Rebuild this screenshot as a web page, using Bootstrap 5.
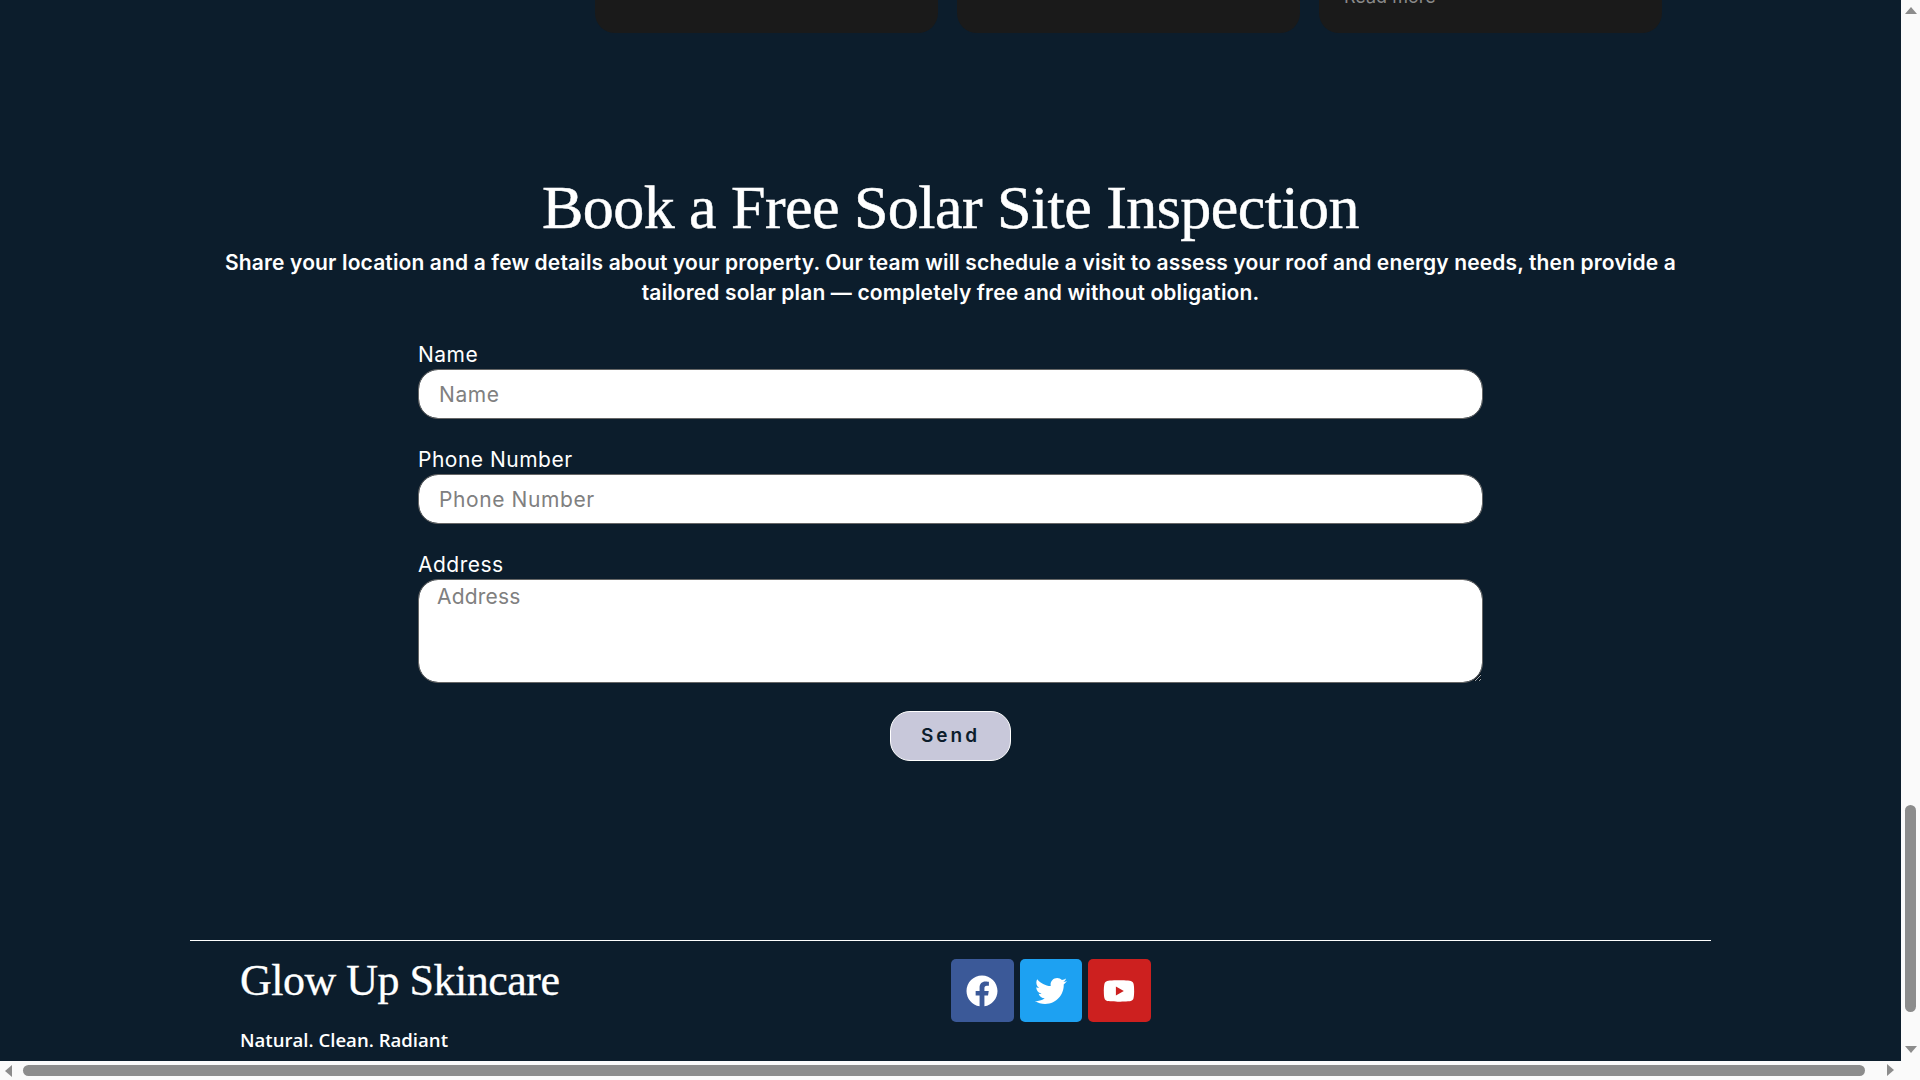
<!DOCTYPE html>
<html lang="en">
<head>
  <meta charset="UTF-8" />
  <meta name="viewport" content="width=device-width, initial-scale=1.0"/>
  <title>Book a Free Solar Site Inspection</title>
  <link href="https://cdn.jsdelivr.net/npm/bootstrap@5.3.3/dist/css/bootstrap.min.css" rel="stylesheet"/>
  <style>
    html, body { height: 100%; overflow: hidden; }
    body { background: #fafafa; font-family: "Inter", "Liberation Sans", sans-serif; }
    .view-row { height: 1061px; }
    .page-view { width: 1901px; background: #0c1d2c; overflow: hidden; color: #fff; }
    .h-row { height: 19px; }

    .blog-row { margin-left: 595px; gap: 19px; height: 33px; }
    .blog-card { width: 343px; background: #1a1a1a; border-radius: 0 0 20px 20px; overflow: hidden; }
    .read-more { display: block; margin: -13px 0 0 25px; font-size: 18px; line-height: 20px; color: #8a8a8a; }

    .inspect-title { margin: 140px 0 0; font-family: "Liberation Serif", serif; font-size: 62px; line-height: 68px; letter-spacing: -.55px; -webkit-text-stroke: .5px #fff; text-align: center; }
    .inspect-sub { margin: 7px auto 0; width: 1460px; font-size: 21px; font-weight: 600; letter-spacing: .14px; line-height: 30px; text-align: center; }
    .inspect-form { width: 1065px; margin: 33px auto 0; }
    .field-wrap { margin-bottom: 27px; }
    .field-wrap.last-field { margin-bottom: 28px; }
    .field-label { display: block; margin: 0; font-size: 21px; letter-spacing: .5px; line-height: 28px; }
    .form-control.solar-input { height: 50px; padding: 0 20px; border: 1px solid #666; border-radius: 20px; font-size: 21px; letter-spacing: .6px; color: #333; }
    .form-control.solar-area { height: 104px; padding: 3px 18px; border: 1px solid #666; border-radius: 20px; font-size: 21px; letter-spacing: .2px; line-height: 28px; color: #333; }
    .solar-input::placeholder, .solar-area::placeholder { color: #808080; }
    .btn.send-btn { width: 121px; height: 50px; padding: 0; background: #c8c8da; border: 1px solid #fff; border-radius: 20px; color: #0c1d2c; font-size: 19px; font-weight: 600; letter-spacing: 3px; }

    .foot-line { width: 1521px; margin: 179px 0 0 190px; padding-top: 15px; border-top: 1px solid #fff; }
    .foot-brand { width: 761px; padding-left: 50px; }
    .foot-title { margin: 0; font-family: "Liberation Serif", serif; font-size: 44px; line-height: 50px; letter-spacing: -.5px; -webkit-text-stroke: .3px #fff; }
    .foot-tag { margin: 22px 0 0; font-family: "Open Sans", sans-serif; font-size: 18.6px; font-weight: 600; line-height: 24px; }
    .social-row { gap: 6px; margin-top: 3px; }
    .social-btn { width: 62.5px; height: 63px; border-radius: 5px; }
    .social-btn svg { width: 32px; height: 32px; fill: #fff; }
    .soc-fb { background: #3b5998; }
    .soc-tw { background: #1da1f2; }
    .soc-yt { background: #cd201f; }

    .v-bar { width: 19px; position: relative; }
    .v-thumb { position: absolute; left: 4px; top: 805px; width: 11px; height: 207px; border-radius: 6px; background: #8c8c8c; }
    .h-thumb { position: absolute; left: 23px; top: 4px; width: 1842px; height: 11px; border-radius: 6px; background: #8c8c8c; }
    .arrow-up { position: absolute; left: 4px; top: 7px; border: 6px solid transparent; border-top: 0; border-bottom: 7px solid #8c8c8c; }
    .arrow-down { position: absolute; left: 4px; top: 1046px; border: 6px solid transparent; border-bottom: 0; border-top: 7px solid #8c8c8c; }
    .arrow-left { position: absolute; left: 5px; top: 4px; border: 6px solid transparent; border-left: 0; border-right: 7px solid #8c8c8c; }
    .arrow-right { position: absolute; left: 1887px; top: 3px; border: 6px solid transparent; border-right: 0; border-left: 7px solid #8c8c8c; }
  </style>
</head>
<body>

  <div class="d-flex view-row">
    <div class="page-view">
      <div class="d-flex blog-row">
        <div class="blog-card"></div>
        <div class="blog-card"></div>
        <div class="blog-card"><a class="read-more text-decoration-none" href="#">Read more</a></div>
      </div>

      <h2 class="inspect-title">Book a Free Solar Site Inspection</h2>
      <p class="inspect-sub">Share your location and a few details about your property. Our team will schedule a visit to assess your roof and energy needs, then provide a tailored solar plan — completely free and without obligation.</p>

      <form class="inspect-form">
        <div class="field-wrap">
          <label class="field-label" for="name">Name</label>
          <input type="text" class="form-control solar-input" id="name" placeholder="Name"/>
        </div>
        <div class="field-wrap">
          <label class="field-label" for="phone">Phone Number</label>
          <input type="text" class="form-control solar-input" id="phone" placeholder="Phone Number"/>
        </div>
        <div class="field-wrap last-field">
          <label class="field-label" for="address">Address</label>
          <textarea class="form-control solar-area" id="address" placeholder="Address"></textarea>
        </div>
        <div class="text-center">
          <button type="button" class="btn send-btn">Send</button>
        </div>
      </form>

      <footer class="foot-line d-flex">
        <div class="foot-brand">
          <h3 class="foot-title">Glow Up Skincare</h3>
          <p class="foot-tag">Natural. Clean. Radiant</p>
        </div>
        <div class="d-flex social-row align-items-start">
          <a href="#" class="social-btn soc-fb d-flex align-items-center justify-content-center" aria-label="Facebook">
            <svg viewBox="0 0 512 512"><path d="M504 256C504 119 393 8 256 8S8 119 8 256c0 123.78 90.69 226.38 209.25 245V327.69h-63V256h63v-54.64c0-62.15 37-96.48 93.67-96.48 27.14 0 55.52 4.84 55.52 4.84v61h-31.28c-30.8 0-40.41 19.12-40.41 38.73V256h68.78l-11 71.69h-57.78V501C413.31 482.38 504 379.78 504 256z"/></svg>
          </a>
          <a href="#" class="social-btn soc-tw d-flex align-items-center justify-content-center" aria-label="Twitter">
            <svg viewBox="0 0 512 512"><path d="M459.37 151.716c.325 4.548.325 9.097.325 13.645 0 138.72-105.583 298.558-298.558 298.558-59.452 0-114.68-17.219-161.137-47.106 8.447.974 16.568 1.299 25.34 1.299 49.055 0 94.213-16.568 130.274-44.832-46.132-.975-84.792-31.188-98.112-72.772 6.498.974 12.995 1.624 19.818 1.624 9.421 0 18.843-1.3 27.614-3.573-48.081-9.747-84.143-51.98-84.143-102.985v-1.299c13.969 7.797 30.214 12.67 47.431 13.319-28.264-18.843-46.781-51.005-46.781-87.391 0-19.492 5.197-37.36 14.294-52.954 51.655 63.675 129.3 105.258 216.365 109.807-1.624-7.797-2.599-15.918-2.599-24.04 0-57.828 46.782-104.934 104.934-104.934 30.213 0 57.502 12.67 76.67 33.137 23.715-4.548 46.456-13.32 66.599-25.34-7.798 24.366-24.366 44.833-46.132 57.827 21.117-2.273 41.584-8.122 60.426-16.243-14.292 20.791-32.161 39.308-52.628 54.253z"/></svg>
          </a>
          <a href="#" class="social-btn soc-yt d-flex align-items-center justify-content-center" aria-label="YouTube">
            <svg viewBox="0 0 576 512"><path d="M549.655 124.083c-6.281-23.65-24.787-42.276-48.284-48.597C458.781 64 288 64 288 64S117.22 64 74.629 75.486c-23.497 6.322-42.003 24.947-48.284 48.597-11.412 42.867-11.412 132.305-11.412 132.305s0 89.438 11.412 132.305c6.281 23.65 24.787 41.5 48.284 47.821C117.22 448 288 448 288 448s170.78 0 213.371-11.486c23.497-6.321 42.003-24.171 48.284-47.821 11.412-42.867 11.412-132.305 11.412-132.305s0-89.438-11.412-132.305zm-317.51 213.508V175.185l142.739 81.205-142.739 81.201z"/></svg>
          </a>
        </div>
      </footer>
    </div>
    <div class="v-bar">
      <span class="arrow-up"></span>
      <span class="v-thumb"></span>
      <span class="arrow-down"></span>
    </div>
  </div>
  <div class="h-row position-relative">
    <span class="arrow-left"></span>
    <span class="h-thumb"></span>
    <span class="arrow-right"></span>
  </div>

</body>
</html>
